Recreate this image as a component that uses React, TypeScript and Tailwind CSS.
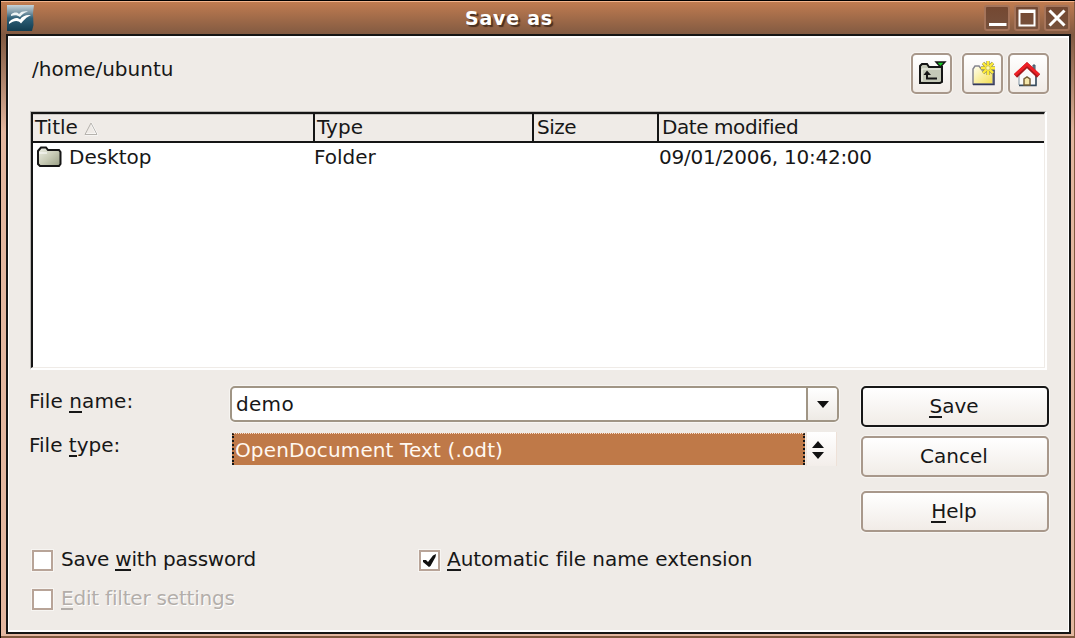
import type { ReactNode } from "react";

function Accel({ children }: { children: ReactNode }) {
  return <span className="inline-block h-[22px] border-b-2 border-current leading-[20px]">{children}</span>;
}

function TitleBar() {
  return (
    <header className="flex h-[32px] shrink-0 items-start pl-[6px] pr-[4px]">
      <svg className="mt-[3px] h-[27px] w-[27px]" viewBox="0 0 27 27">
        <defs>
          <linearGradient id="app" x1="0" y1="0" x2="0" y2="1">
            <stop offset="0" stopColor="#c7d3d9" />
            <stop offset="0.28" stopColor="#7f9aa8" />
            <stop offset="0.5" stopColor="#2f6078" />
            <stop offset="1" stopColor="#123c50" />
          </linearGradient>
        </defs>
        <path d="M0 0H27L26 8L26.5 20L25 26H0Z" fill="url(#app)" />
        <path d="M4 9.5C7 7 10 7 12 9C14 6.5 17 6 21 6.5C17 7.5 15 9.5 13 12C10 9.5 7 10 4 11Z" fill="#eef4f5" />
        <path d="M2 17C7 12 11 12.5 13 14.5C15 11 19 9.5 24 10C19 12.5 17 15 14 18.5C11 15 7 15.5 2 19Z" fill="#fff" />
      </svg>
      <h1 className="flex-1 pl-0 pt-[4px] text-center text-[19px] leading-[24px] font-bold tracking-[0.75px] text-white [text-shadow:2px_2px_1px_#4b3020]">Save as</h1>
      <div className="mt-[3px] flex gap-[4px]">
        <WindowButton><path d="M5 19.5H22.5" /></WindowButton>
        <WindowButton><path d="M5.5 5.5H20.5V20.5H5.5ZM5 7H21" strokeWidth="2" /></WindowButton>
        <WindowButton><path d="M5.5 5.5L20.5 20.5M20.5 5.5L5.5 20.5" /></WindowButton>
      </div>
    </header>
  );
}

function WindowButton({ children }: { children: ReactNode }) {
  return (
    <button className="h-[26px] w-[26px] rounded-[3px] border-2 border-[#a5745a] bg-linear-to-b from-[#744832] to-[#76513c]">
      <svg className="-m-[2px] h-[26px] w-[26px]" viewBox="0 0 26 26" fill="none" stroke="#fff" strokeWidth="3">{children}</svg>
    </button>
  );
}

function ToolButton({ children }: { children: ReactNode }) {
  return (
    <button className="h-[41px] w-[41px] rounded-[5px] border-2 border-[#a8988b] bg-linear-to-b from-white to-[#f1ece7] shadow-[0_0_0_1px_#f7f5f2]">
      <svg className="-m-[2px] h-[41px] w-[41px]" viewBox="0 0 41 41" fill="none">{children}</svg>
    </button>
  );
}

function PushButton({ children, primary = false }: { children: ReactNode; primary?: boolean }) {
  return (
    <button className={`flex h-[41px] w-[188px] items-center justify-center rounded-[5px] border-2 bg-linear-to-b from-white to-[#f1ece7] pb-[2px] pr-[2px] shadow-[0_0_0_1px_#f7f5f2] ${primary ? "border-[#171717]" : "border-[#a8988b]"}`}>
      <span>{children}</span>
    </button>
  );
}

function CheckBox({ checked = false }: { checked?: boolean }) {
  return (
    <span className="mt-[1px] h-[21px] w-[21px] border-2 border-[#b8a498] bg-white shadow-[0_0_0_1px_#f7f5f2]">
      {checked && (
        <svg className="h-[17px] w-[17px]" viewBox="0 0 17 17">
          <path d="M2 8H5L7 10L12 3.5L15 2L14.5 5L9.5 14L8 15L2 10Z" fill="#111" />
        </svg>
      )}
    </span>
  );
}

function FileList() {
  return (
    <section className="ml-[21px] h-[259px] w-[1017px] border-l border-t border-[#b9b7b3] border-r-2 border-b-2 border-r-white border-b-white">
      <div className="h-[256px] border-l-2 border-t-2 border-r border-b border-l-[#151515] border-t-[#151515] border-r-[#efebe7] border-b-[#efebe7] bg-white">
        <div className="flex h-[29px] border-b-2 border-[#151515] bg-[#efebe7] leading-[26px] shadow-[inset_0_1px_0_#c9c6c2]">
          <div className="flex w-[282px] border-r-2 border-[#151515] pl-[2px]">
            <span>Title</span>
            <svg className="ml-[6px] mt-[8px] h-[14px] w-[14px]" viewBox="0 0 14 14" fill="none">
              <path d="M7 1L13 12.5H1" stroke="#fff" strokeWidth="2" />
              <path d="M7 1L1 12.5H13L7 1" stroke="#b5b2ad" />
            </svg>
          </div>
          <div className="w-[219px] border-r-2 border-[#151515] pl-[2px]">Type</div>
          <div className="w-[125px] border-r-2 border-[#151515] pl-[3px] tracking-[-0.5px]">Size</div>
          <div className="pl-[3px] tracking-[-0.42px]">Date modified</div>
        </div>
        <div className="flex h-[28px] leading-[28px]">
          <div className="flex w-[281px] pl-[4px]">
            <svg className="mr-[7px] mt-[3px] h-[22px] w-[25px]" viewBox="0 0 25 22">
              <defs>
                <linearGradient id="folder" x1="0" y1="0" x2="1" y2="1">
                  <stop offset="0" stopColor="#f0f1e8" />
                  <stop offset="0.5" stopColor="#c9ccb7" />
                  <stop offset="1" stopColor="#989e83" />
                </linearGradient>
              </defs>
              <path d="M1 5L4 1.5H9L11 4H22L23.5 6V18L22 20H3L1 18Z" fill="url(#folder)" stroke="#151515" strokeWidth="2" />
              <path d="M2 7H10" stroke="#fff" />
            </svg>
            <span>Desktop</span>
          </div>
          <div className="w-[345px]">Folder</div>
          <div className="tracking-[-0.25px]">09/01/2006, 10:42:00</div>
        </div>
      </div>
    </section>
  );
}

export default function App() {
  return (
    <main className="flex h-[638px] w-[1075px] flex-col overflow-hidden border-l border-t border-black bg-[#e3b7a0] font-['DejaVu_Sans',sans-serif] text-[20px] leading-[24px] text-[#171717]">
      <div className="flex h-[637px] flex-col border-b-2 border-r border-t border-b-[#80583f] border-r-[#80583f] border-t-[#f3b58d] bg-linear-to-b from-[#c17c50] via-[#805941] via-[33px] to-[#e3b7a0] to-[130px]">
        <TitleBar />
        <div className="ml-[5px] h-[600px] w-[1065px] border-2 border-[#151515]">
          <div className="h-[596px] w-[1061px] border border-t-2 border-b-2 border-white bg-[#efebe7]">
            <div className="flex h-[73px] items-start">
              <div className="flex-1 pl-[23px] pt-[19px]">/home/ubuntu</div>
              <div className="flex pr-[19px] pt-[15px]">
                <ToolButton>
                  <path d="M9 30V13L11 11H16L18 14H31V29L29 30H10Z" fill="#c5c9b8" stroke="#151515" strokeWidth="2" />
                  <path d="M11 16H29M11 16V28" stroke="#f5f5ed" />
                  <path d="M16 20V25.5H26" stroke="#151515" strokeWidth="2" />
                  <path d="M12.5 22L16 17.5L20 22Z" fill="#151515" />
                  <path d="M25 9H34L29.5 14Z" fill="#15cc24" stroke="#151515" strokeWidth="1.5" />
                </ToolButton>
                <div className="w-[10px]" />
                <ToolButton>
                  <defs>
                    <linearGradient id="new-folder" x1="0" y1="0" x2="1" y2="1">
                      <stop stopColor="#fffff5" />
                      <stop offset="1" stopColor="#f5df4b" />
                    </linearGradient>
                  </defs>
                  <path d="M11 31V16L13 13H17L20 17H31V31Z" fill="url(#new-folder)" stroke="#85858e" strokeWidth="1.5" />
                  <path d="M11 31.5H32V17" stroke="#34395b" strokeWidth="1.5" />
                  <path d="M26 8V22M19 15H33M21 10L31 20M31 10L21 20" stroke="#8c8c60" strokeWidth="3.3" />
                  <path d="M26 8V22M19 15H33M21 10L31 20M31 10L21 20" stroke="#ffec35" strokeWidth="2.3" />
                  <circle cx="26" cy="15" r="2.2" fill="#fffbb0" stroke="#b8ad47" strokeWidth="0.7" />
                </ToolButton>
                <div className="w-[5px]" />
                <ToolButton>
                  <path d="M25 12H27V20H25Z" fill="#789" stroke="#405364" />
                  <path d="M11 21L19 13L28 21V32H11Z" fill="#fafafa" stroke="#8195a5" />
                  <path d="M11 32.5H28V22" stroke="#36495b" strokeWidth="1.5" />
                  <path d="M16 32V26L19 24L22 26V32Z" fill="#f5e7a9" stroke="#786238" strokeWidth="1.5" />
                  <path d="M7.5 23L19 12L30.5 23" stroke="#a8181b" strokeWidth="4.5" />
                  <path d="M7 22L19 11.2L31 22" stroke="#ef2026" strokeWidth="3" />
                </ToolButton>
              </div>
            </div>
            <FileList />
            <div className="flex h-[162px] pl-[20px] pt-[16px]">
              <div className="w-[201px]">
                <label className="block h-[27px] pt-[3px] tracking-[0.1px]">File <Accel>n</Accel>ame:</label>
                <label className="block h-[44px] pt-[20px]">File <Accel>t</Accel>ype:</label>
              </div>
              <div className="w-[631px]">
                <div className="flex h-[36px] w-[609px] overflow-hidden rounded-[5px] border-2 border-[#a09585] bg-white shadow-[0_0_0_1px_#f7f5f2]">
                  <div className="w-[574px] pl-[4px] leading-[32px] tracking-[0.3px]">demo</div>
                  <div className="flex flex-1 items-center justify-center border-l-2 border-[#a09585] bg-linear-to-b from-white to-[#eeeae5]">
                    <svg className="h-[8px] w-[12px]" viewBox="0 0 12 8"><path d="M0 1H12L6 8Z" fill="#111" /></svg>
                  </div>
                </div>
                <div className="mt-[10px] flex h-[34px] w-[608px] pl-[2px]">
                  <div className="mt-[1px] h-[32px] w-[573px] border-x-2 border-t border-dotted border-x-[#151515] border-t-[#f5ddce] bg-[#bf7948] pl-[1px] leading-[33px] tracking-[0.13px] text-[#fff8f1]">OpenDocument Text (.odt)</div>
                  <div className="ml-[1px] flex w-[31px] items-center justify-center border-x border-[#eee1d8] bg-linear-to-b from-white to-[#f3eeea] pt-[2px] pr-[7px]">
                    <svg className="h-[20px] w-[12px]" viewBox="0 0 12 20" fill="#111"><path d="M0 8L6 1L12 8ZM0 12H12L6 19Z" /></svg>
                  </div>
                </div>
              </div>
              <div className="flex flex-col">
                <PushButton primary><Accel>S</Accel>ave</PushButton>
                <div className="h-[9px]" />
                <PushButton>Cancel</PushButton>
                <div className="h-[14px]" />
                <PushButton><Accel>H</Accel>elp</PushButton>
              </div>
            </div>
            <div className="flex h-[39px] pl-[23px] pt-[17px]">
              <label className="flex w-[387px] shrink-0 gap-[8px]">
                <CheckBox />
                <span className="-mt-[2px] tracking-[-0.23px]">Save <Accel>w</Accel>ith password</span>
              </label>
              <label className="flex gap-[7px]">
                <CheckBox checked />
                <span className="-mt-[2px] tracking-[-0.03px]"><Accel>A</Accel>utomatic file name extension</span>
              </label>
            </div>
            <label className="flex gap-[8px] pl-[23px] pt-[17px] text-[#b3aeaa] [text-shadow:1px_1px_0_#fff]">
              <CheckBox />
              <span className="-mt-[2px] tracking-[-0.2px]"><Accel>E</Accel>dit filter settings</span>
            </label>
          </div>
        </div>
      </div>
    </main>
  );
}
